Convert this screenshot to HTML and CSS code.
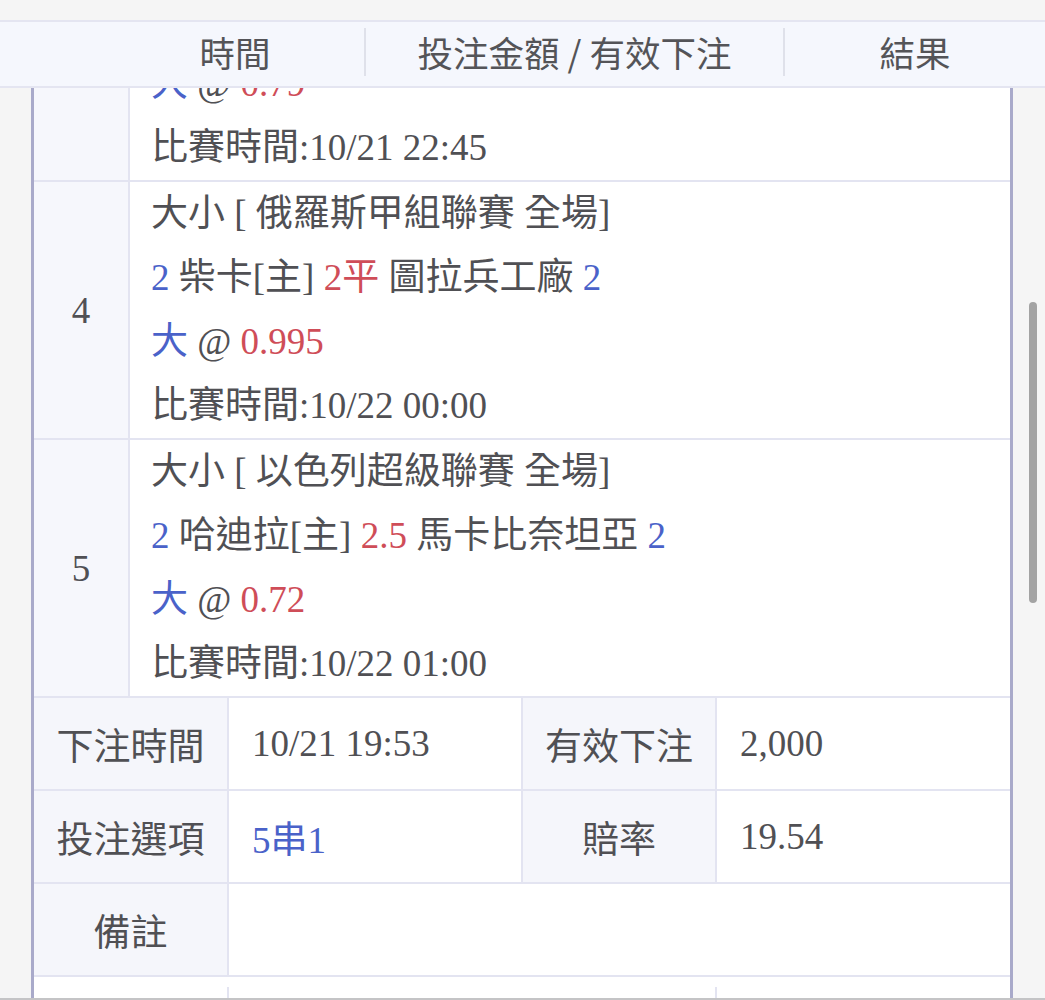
FILE: index.html
```html
<!DOCTYPE html>
<html lang="zh-Hant">
<head>
<meta charset="utf-8">
<title>注單詳情</title>
<link rel="stylesheet" href="styles.css">
</head>
<body>
<header class="topbar">
  <div class="thead">
    <div class="th th-blank"></div>
    <div class="th">時間</div>
    <div class="th th-sep">投注金額 / 有效下注</div>
    <div class="th th-sep">結果</div>
  </div>
</header>

<main class="card">
  <section class="leg">
    <div class="leg-no">3</div>
    <div class="leg-body">
      <p>大小 [ 英格蘭冠軍聯賽 全場]</p>
      <p><span class="blue">2</span> 斯托克城[主] <span class="red">2.5</span> 布里斯托城 <span class="blue">2</span></p>
      <p><span class="blue">大</span> @ <span class="red">0.79</span></p>
      <p>比賽時間:10/21 22:45</p>
    </div>
  </section>
  <section class="leg">
    <div class="leg-no">4</div>
    <div class="leg-body">
      <p>大小 [ 俄羅斯甲組聯賽 全場]</p>
      <p><span class="blue">2</span> 柴卡[主] <span class="red">2平</span> 圖拉兵工廠 <span class="blue">2</span></p>
      <p><span class="blue">大</span> @ <span class="red">0.995</span></p>
      <p>比賽時間:10/22 00:00</p>
    </div>
  </section>
  <section class="leg">
    <div class="leg-no">5</div>
    <div class="leg-body">
      <p>大小 [ 以色列超級聯賽 全場]</p>
      <p><span class="blue">2</span> 哈迪拉[主] <span class="red">2.5</span> 馬卡比奈坦亞 <span class="blue">2</span></p>
      <p><span class="blue">大</span> @ <span class="red">0.72</span></p>
      <p>比賽時間:10/22 01:00</p>
    </div>
  </section>

  <section class="info">
    <div class="cell label">下注時間</div>
    <div class="cell value">10/21 19:53</div>
    <div class="cell label">有效下注</div>
    <div class="cell value last">2,000</div>

    <div class="cell label">投注選項</div>
    <div class="cell value"><span class="blue">5串1</span></div>
    <div class="cell label">賠率</div>
    <div class="cell value last">19.54</div>

    <div class="cell label">備註</div>
    <div class="cell value wide last"></div>

    <div class="tail"><span></span></div>
    <div class="tail tail-mid"><span></span></div>
    <div class="tail last"><span></span></div>
  </section>
</main>

<div class="scrollbar"></div>
<div class="bottomline"></div>
</body>
</html>
```

FILE: styles.css
```css
html, body {
  margin: 0;
  padding: 0;
}

body {
  background: #f5f5f5;
  font-family: "Liberation Serif", "Noto Sans CJK TC", serif;
  font-size: 37px;
  color: #505054;
  overflow: hidden;
  height: 1000px;
}

p {
  margin: 0;
}

.blue { color: #4a62c9; }
.red { color: #cf4d58; }

/* fixed header over scrolled content */
.topbar {
  position: fixed;
  top: 0;
  left: 0;
  right: 0;
  padding-top: 20px;
  background: #f5f5f5;
  z-index: 5;
}

.thead {
  display: grid;
  grid-template-columns: 106px 258px 419px 1fr;
  align-items: center;
  height: 64px;
  background: #f5f7fd;
  border-top: 2px solid #e4e5f1;
  border-bottom: 2px solid #e4e5f1;
  font-family: "Noto Sans CJK TC", sans-serif;
  font-size: 35.5px;
  color: #545458;
}

.th {
  height: 48px;
  display: flex;
  align-items: center;
  justify-content: center;
  line-height: 48px;
  margin-top: -4px;
}

.th-sep {
  border-left: 2px solid #dfe1ea;
}

/* card */
.card {
  margin: -76px 0 0 31px;
  width: 976px;
  background: #fff;
  border-left: 3px solid #a9aaca;
  border-right: 3px solid #a9aaca;
}

.leg {
  display: grid;
  grid-template-columns: 96px 1fr;
  border-bottom: 2px solid #e3e4f1;
}

.leg-no {
  background: #f6f7fc;
  border-right: 2px solid #e3e4f1;
  display: flex;
  align-items: center;
  justify-content: center;
}

.leg-body {
  padding-left: 21px;
  line-height: 64px;
  white-space: nowrap;
}

.info {
  display: grid;
  grid-template-columns: 195px 294px 194px 1fr;
}

.cell {
  height: 91px;
  display: flex;
  align-items: center;
  border-right: 2px solid #e3e4f1;
  border-bottom: 2px solid #e3e4f1;
}

.cell.last {
  border-right: none;
}

.label {
  background: #f5f6fb;
  justify-content: center;
}

.value {
  padding-left: 23px;
}

.wide {
  grid-column: span 3;
}

.tail {
  padding-top: 10px;
  height: 40px;
}

.tail-mid {
  grid-column: span 2;
}

.tail span {
  display: block;
  height: 100%;
  border-right: 2px solid #e3e4f1;
}

.tail.last span {
  border-right: none;
}

.scrollbar {
  position: fixed;
  left: 1029px;
  top: 302px;
  width: 8px;
  height: 301px;
  border-radius: 4px;
  background: #a3a3a3;
}

.bottomline {
  position: fixed;
  left: 0;
  right: 0;
  bottom: 0;
  height: 2px;
  background: #c4c4c6;
  z-index: 6;
}
```
